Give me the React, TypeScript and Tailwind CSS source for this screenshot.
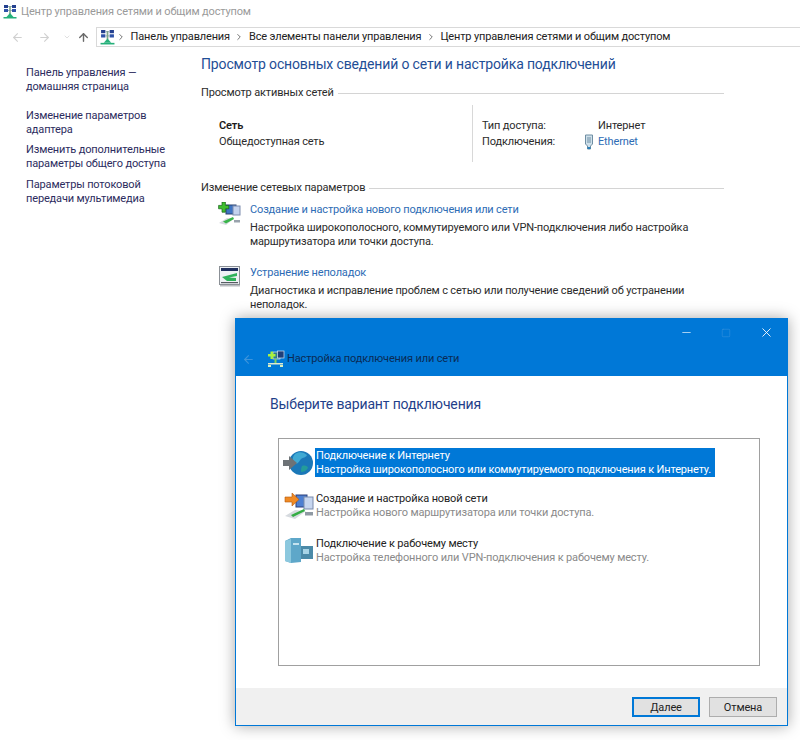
import React from "react";
import { ArrowLeft, ArrowRight, ArrowUp, ChevronDown, ChevronRight, X, Minus, Square } from "lucide-react";

function NetIcon({ size = 14 }: { size?: number }) {
  return (
    <svg width={size} height={size} viewBox="0 0 14 14" className="shrink-0">
      <rect x="1" y="0" width="4" height="3" fill="#24408f" />
      <rect x="9" y="0" width="4" height="3" fill="#24408f" />
      <rect x="1" y="4" width="4" height="3" fill="#2f53a8" />
      <rect x="9" y="4" width="4" height="3" fill="#2f53a8" />
      <rect x="5" y="1" width="4" height="1" fill="#9fb0c4" />
      <rect x="5" y="5" width="4" height="1" fill="#9fb0c4" />
      <rect x="6.200" y="1" width="1.600" height="8" fill="#7fa58a" />
      <path d="M3.500 12 L7 8 L10.500 12 Z" fill="#25b07a" />
      <rect x="0.500" y="12" width="13" height="1.500" fill="#25b07a" />
    </svg>
  );
}

function NewConnIcon() {
  return (
    <svg width="24" height="24" viewBox="0 0 24 24" className="shrink-0">
      <rect x="8" y="3" width="10" height="9" fill="#3d74c4" stroke="#28406e" />
      <rect x="15" y="4" width="7" height="9" fill="#c5d3ee" stroke="#7c8cae" />
      <path d="M4 0h3.400v3.400h3.400v3.400H7.400v3.400H4V6.800H.6V3.400H4z" fill="#3fbf2f" stroke="#16601a" strokeWidth=".7" />
      <path d="M1 21 L9 16 L16 16.500 L8 23 Z" fill="#d6dadf" />
      <path d="M5 19.500 L15 15 L16 17 L8 21.500 Z" fill="#39b54a" />
      <rect x="16" y="18" width="6" height="2.500" fill="#9aa3ad" />
    </svg>
  );
}

function TroubleIcon() {
  return (
    <svg width="22" height="22" viewBox="0 0 22 22" className="shrink-0">
      <rect x=".5" y="1.500" width="20" height="18" fill="#eef1f4" stroke="#8b9096" />
      <rect x="2" y="3" width="17" height="3" fill="#1f2f5e" />
      <path d="M3 12 L18 8 V11 L10 12.500 L17 13 V16 H8 Z" fill="#2fb25a" />
      <rect x="2" y="17" width="17" height="1.200" fill="#565b62" />
      <rect x="1" y="20" width="20" height="1.500" fill="#b9bcc0" />
    </svg>
  );
}

function SmallWizardIcon() {
  return (
    <svg width="18" height="18" viewBox="0 0 18 18" className="shrink-0">
      <rect x="6" y="2" width="7" height="7" fill="#2e7f88" stroke="#d6e4f2" strokeWidth=".7" />
      <rect x="10.500" y="1" width="6.500" height="7" fill="#1f3f7a" stroke="#d6e4f2" strokeWidth=".7" />
      <path d="M3.500 1.500h2.500v2.500h2.500v2.500H6v2.500H3.500V6.500H1V4h2.500z" fill="#a9f03f" />
      <rect x="1" y="13" width="15" height="1.500" fill="#dfe9cf" />
      <rect x="7.500" y="9" width="2" height="4" fill="#7fd05a" />
      <rect x="1" y="15" width="3" height="2" fill="#d7f0c0" />
      <rect x="13" y="15" width="3" height="2" fill="#d7f0c0" />
    </svg>
  );
}

function GlobeIcon() {
  return (
    <svg width="32" height="28" viewBox="0 0 32 28" className="shrink-0">
      <circle cx="18" cy="14" r="12" fill="#1b78b8" />
      <path d="M12 5c4-3 9-2 12 1-1 3-4 2-6 4s-3 6-6 4-3-6 0-9z" fill="#3fa9d3" />
      <path d="M19 17c3-1 6 0 6 2-2 3-5 4-7 4 0-2 0-4 1-6z" fill="#249c9a" />
      <path d="M0 11h6V7l8 7-8 7v-4H0z" fill="#6d7276" />
    </svg>
  );
}

function NewNetIcon() {
  return (
    <svg width="30" height="28" viewBox="0 0 30 28" className="shrink-0">
      <rect x="12" y="3" width="11" height="12" fill="#4d7fd1" stroke="#2a3f7a" />
      <rect x="20" y="5" width="9" height="12" fill="#c7d6ef" stroke="#7b8bab" />
      <path d="M1 5h7V1l7 6.500L8 14v-4H1z" fill="#f08a24" stroke="#b4580c" strokeWidth=".6" />
      <path d="M1 24 L11 18 L22 19 L11 27 Z" fill="#d6dadf" />
      <path d="M7 23 L20 17 L21 19 L9 25 Z" fill="#35ad45" />
      <rect x="21" y="20" width="8" height="3.500" fill="#8f99a3" />
    </svg>
  );
}

function WorkIcon() {
  return (
    <svg width="30" height="26" viewBox="0 0 30 26" className="shrink-0">
      <path d="M1 3 L7 0 H17 V24 L7 25 L1 23 Z" fill="#5ea7c9" />
      <path d="M1 3 L7 1 V25 L1 23 Z" fill="#8cc8de" />
      <rect x="17" y="8" width="12" height="13" fill="#4b8aa8" />
      <rect x="19" y="11" width="6" height="5" fill="#a8d4e6" />
      <rect x="9" y="5" width="6" height="2" fill="#c4e3ef" />
    </svg>
  );
}

function PlugIcon() {
  return (
    <svg width="12" height="16" viewBox="0 0 12 16" className="shrink-0">
      <path d="M2.500 1h7v9l-2 2v3h-3v-3l-2-2z" fill="#cfe0ea" stroke="#6f8ea3" />
      <rect x="4.500" y="3" width="1" height="6" fill="#6f8ea3" />
      <rect x="6.500" y="3" width="1" height="6" fill="#6f8ea3" />
      <rect x="4.500" y="13" width="3" height="2" fill="#2c7fb8" />
    </svg>
  );
}

function SectionTitle({ text }: { text: string }) {
  return (
    <div className="flex items-center gap-[4px]">
      <span className="text-[#2b2b2b] text-[11px] leading-[16px] whitespace-nowrap">{text}</span>
      <div className="flex-1 h-px bg-[#d4d4d4]" />
    </div>
  );
}

function Crumb({ text }: { text: string }) {
  return (
    <>
      <ChevronRight size={10} strokeWidth={2} className="text-[#5a5a5a] mx-[4px] shrink-0" />
      <span className="whitespace-nowrap px-[0.5px]">{text}</span>
    </>
  );
}

function Option({
  icon,
  title,
  desc,
  selected,
}: {
  icon: React.ReactNode;
  title: string;
  desc: string;
  selected?: boolean;
}) {
  return (
    <div className="flex items-center">
      <div className="w-[33px] flex justify-center shrink-0">{icon}</div>
      <div
        className={
          "text-[11px] leading-[14px] whitespace-nowrap pt-[1px] pl-[1px] " +
          (selected ? "bg-[#0078d7] text-white w-[400px]" : "text-[#222]")
        }
      >
        <div>{title}</div>
        <div className={selected ? "text-white" : "text-[#8a8a8a]"}>{desc}</div>
      </div>
    </div>
  );
}

export default function App() {
  return (
    <div className="relative w-[800px] h-[740px] overflow-hidden bg-white font-['Roboto','Open_Sans',sans-serif] text-[11px] tracking-[-0.15px] text-[#2b2b2b]">
      {/* Title bar */}
      <div className="flex items-center h-[22px] pl-[3px] gap-[4px] pt-[2px]">
        <NetIcon />
        <span className="text-[#9a9a9a] text-[11px] whitespace-nowrap">Центр управления сетями и общим доступом</span>
      </div>

      {/* Nav bar */}
      <div className="flex items-center h-[22px] mt-[4px]">
        <div className="flex items-center w-[96px] shrink-0 pl-[11px] text-[#d0d0d0]">
          <ArrowLeft size={13} />
          <ArrowRight size={13} className="ml-[14px]" />
          <ChevronDown size={8} className="ml-[12px]" />
          <ArrowUp size={13} strokeWidth={2.6} className="ml-[6px] text-[#6a6a6a]" />
        </div>
        <div className="flex items-center flex-1 h-[20px] border-y border-l border-[#d9d9d9] pl-[3px] text-[#222] text-[11px]">
          <div className="mr-[-3px]">
            <NetIcon size={15} />
          </div>
          <Crumb text="Панель управления" />
          <Crumb text="Все элементы панели управления" />
          <Crumb text="Центр управления сетями и общим доступом" />
        </div>
      </div>

      {/* Body */}
      <div className="flex">
        {/* Sidebar */}
        <div className="w-[201px] shrink-0 pl-[26px] pt-[18px] text-[#2c2c5e] text-[11px] leading-[14px]">
          <div>
            Панель управления —
            <br />
            домашняя страница
          </div>
          <div className="mt-[15px]">
            Изменение параметров
            <br />
            адаптера
          </div>
          <div className="mt-[6px]">
            Изменить дополнительные
            <br />
            параметры общего доступа
          </div>
          <div className="mt-[7px]">
            Параметры потоковой
            <br />
            передачи мультимедиа
          </div>
        </div>

        {/* Main */}
        <div className="w-[523px] pt-[6px]">
          <div className="text-[#1f4e96] text-[14px] leading-[20px] whitespace-nowrap">
            Просмотр основных сведений о сети и настройка подключений
          </div>
          <div className="mt-[11px]">
            <SectionTitle text="Просмотр активных сетей" />
          </div>

          <div className="flex h-[57px] mt-[4px]">
            <div className="w-[271px] pl-[18px] pt-[13px] leading-[16px]">
              <div className="font-semibold text-[#1c1c1c]">Сеть</div>
              <div className="text-[#2b2b2b]">Общедоступная сеть</div>
            </div>
            <div className="w-px bg-[#d8d8d8]" />
            <div className="pl-[9px] pt-[13px] leading-[16px]">
              <div className="flex">
                <span className="w-[116px]">Тип доступа:</span>
                <span>Интернет</span>
              </div>
              <div className="flex">
                <span className="w-[101px]">Подключения:</span>
                <span className="w-[15px]">
                  <PlugIcon />
                </span>
                <span className="text-[#2d6cb5]">Ethernet</span>
              </div>
            </div>
          </div>

          <div className="mt-[18px]">
            <SectionTitle text="Изменение сетевых параметров" />
          </div>

          <div className="flex mt-[6px] pl-[17px]">
            <div className="w-[32px] shrink-0">
              <NewConnIcon />
            </div>
            <div className="leading-[16px]">
              <div className="text-[#2d6cb5]">Создание и настройка нового подключения или сети</div>
              <div className="mt-[3px] leading-[14px] w-[470px]">
                Настройка широкополосного, коммутируемого или VPN-подключения либо настройка маршрутизатора или точки доступа.
              </div>
            </div>
          </div>

          <div className="flex mt-[16px] pl-[18px]">
            <div className="w-[31px] shrink-0">
              <TroubleIcon />
            </div>
            <div className="leading-[16px]">
              <div className="text-[#2d6cb5]">Устранение неполадок</div>
              <div className="mt-[3px] leading-[14px] w-[470px]">
                Диагностика и исправление проблем с сетью или получение сведений об устранении неполадок.
              </div>
            </div>
          </div>
        </div>
      </div>

      {/* Dialog */}
      <div className="absolute left-[235px] top-[318px] w-[553px] h-[408px] flex flex-col bg-white border border-[#0078d7] border-t-0 shadow-[0_0_14px_rgba(0,0,0,0.35)]">
        <div className="h-[58px] bg-[#0078d7] shrink-0 flex flex-col">
          <div className="flex justify-end items-center h-[29px] pr-[13px] gap-[28px] text-white">
            <Minus size={13} strokeWidth={1.2} />
            <Square size={10} strokeWidth={1} className="text-[#4a9be0]" />
            <X size={15} strokeWidth={1.4} />
          </div>
          <div className="flex items-center pl-[6px] h-[24px]">
            <ArrowLeft size={13} className="text-[#3d94dc]" />
            <div className="ml-[12px]">
              <SmallWizardIcon />
            </div>
            <span className="ml-[2px] text-[#0a2b55] text-[11px] whitespace-nowrap">Настройка подключения или сети</span>
          </div>
        </div>

        <div className="flex-1 pl-[34px] pt-[18px] pr-[28px]">
          <div className="text-[#1f3f8a] text-[14px] leading-[20px]">Выберите вариант подключения</div>
          <div className="mt-[24px] ml-[8px] w-[482px] h-[228px] border border-[#a0a0a0] pt-[9px] pl-[3px] flex flex-col gap-[14px]">
            <Option
              selected
              icon={<GlobeIcon />}
              title="Подключение к Интернету"
              desc="Настройка широкополосного или коммутируемого подключения к Интернету."
            />
            <Option
              icon={<NewNetIcon />}
              title="Создание и настройка новой сети"
              desc="Настройка нового маршрутизатора или точки доступа."
            />
            <div className="mt-[2px]">
              <Option
                icon={<WorkIcon />}
                title="Подключение к рабочему месту"
                desc="Настройка телефонного или VPN-подключения к рабочему месту."
              />
            </div>
          </div>
        </div>

        <div className="h-[37px] bg-[#f0f0f0] shrink-0 flex items-center justify-end gap-[9px] pr-[10px] pt-[1px]">
          <button className="w-[68px] h-[20px] bg-[#e1e1e1] border-2 border-[#0078d7] text-[11px] text-[#222] leading-none">
            Далее
          </button>
          <button className="w-[68px] h-[20px] bg-[#e1e1e1] border border-[#adadad] text-[11px] text-[#222] leading-none">
            Отмена
          </button>
        </div>
      </div>
    </div>
  );
}
